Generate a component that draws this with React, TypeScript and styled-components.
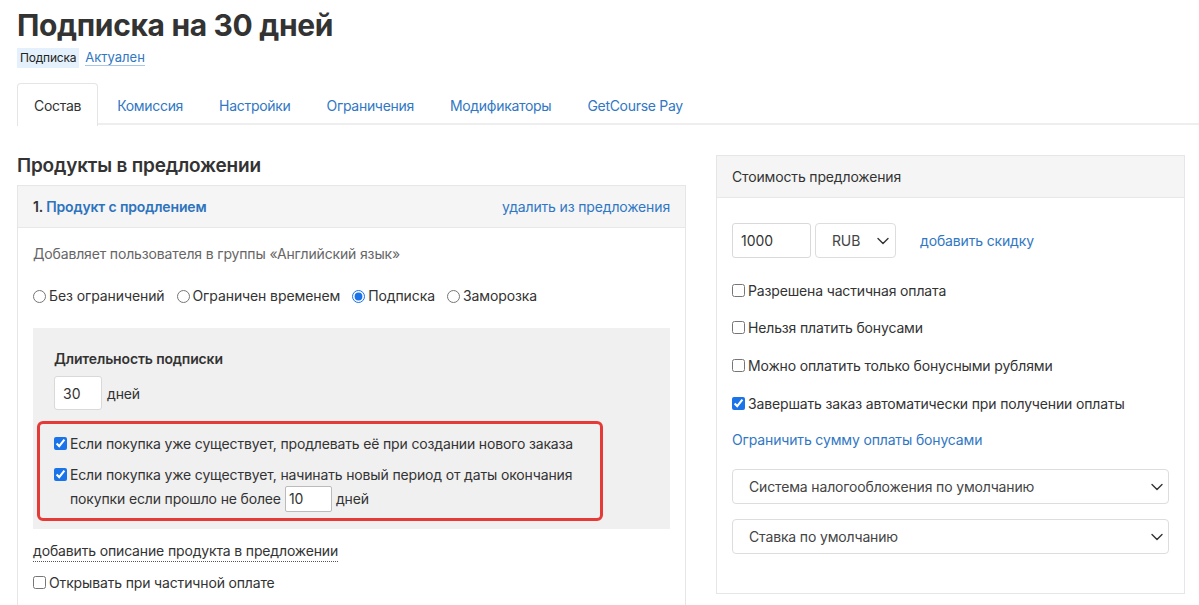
import styled, { createGlobalStyle } from "styled-components";

const GlobalStyle = createGlobalStyle`
  body {
    margin: 0;
    background: #fff;
    font-family: Inter, "Noto Sans", sans-serif;
    color: #333;
  }
  * { box-sizing: border-box; }
`;

const Page = styled.div`
  padding: 6px 0 0 17px;
  overflow: hidden;
`;

const Title = styled.h1`
  margin: 0;
  font-size: 30px;
  font-weight: 700;
  line-height: 38px;
  color: #333;
  letter-spacing: -0.35px;
`;

const Meta = styled.div`
  display: flex;
  align-items: center;
  gap: 6px;
  margin-top: 4px;
  font-size: 12px;
`;

const Badge = styled.span`
  background: #e4f0fb;
  color: #222;
  padding: 3px 3px;
  line-height: 14px;
  letter-spacing: -0.2px;
`;

const MetaLink = styled.a`
  color: #3077c4;
  text-decoration: none;
  border-bottom: 1px solid #a9c8e8;
  font-size: 13px;
  line-height: 15px;
`;

const Tabs = styled.div`
  display: flex;
  margin-top: 15px;
  border-bottom: 2px solid #eee;
  height: 42px;
`;

const Tab = styled.div<{ $active?: boolean }>`
  padding: 0 16px;
  margin-right: 2px;
  display: flex;
  align-items: center;
  font-size: 14px;
  letter-spacing: -0.3px;
  color: ${(p) => (p.$active ? "#333" : "#3077c4")};
  border: 1px solid ${(p) => (p.$active ? "#e5e5e5" : "transparent")};
  border-bottom: none;
  border-radius: 4px 4px 0 0;
  background: ${(p) => (p.$active ? "#fff" : "transparent")};
  margin-bottom: -2px;
  height: 43px;
`;

const Columns = styled.div`
  display: grid;
  grid-template-columns: 669px 469px;
  column-gap: 30px;
  margin-top: 29px;
  letter-spacing: -0.15px;
`;

const Column = styled.div``;

const SectionTitle = styled.h2`
  margin: 0 0 7px;
  font-size: 19px;
  font-weight: 600;
  line-height: 24px;
  color: #333;
  letter-spacing: -0.2px;
`;

const Panel = styled.div<{ $offset?: number }>`
  border: 1px solid #e6e6e6;
  margin-top: ${(p) => p.$offset ?? 0}px;
`;

const PanelHead = styled.div`
  background: #f5f5f5;
  border-bottom: 1px solid #e8e8e8;
  height: 42px;
  padding: 0 15px;
  display: flex;
  align-items: center;
  justify-content: space-between;
  font-size: 14px;
  color: #333;
`;

const HeadTitle = styled.span`
  font-weight: 600;
  a {
    color: #2d73bd;
    text-decoration: none;
  }
`;

const Link = styled.a<{ $mt?: number; $ml?: number }>`
  display: ${(p) => (p.$mt !== undefined ? "block" : "inline")};
  color: #3077c4;
  text-decoration: none;
  font-size: 14px;
  cursor: pointer;
  margin-top: ${(p) => p.$mt ?? 0}px;
  margin-left: ${(p) => p.$ml ?? 0}px;
`;

const PanelBody = styled.div<{ $pad?: string }>`
  padding: ${(p) => p.$pad ?? "15px"};
  font-size: 14px;
`;

const Muted = styled.div`
  color: #666;
  line-height: 20px;
  margin-top: 1px;
`;

const RadioRow = styled.div`
  display: flex;
  gap: 12px;
  margin-top: 22px;
  line-height: 20px;
  letter-spacing: -0.1px;
`;

const Choice = styled.label`
  display: inline-flex;
  align-items: center;
  color: #333;
  input {
    margin: 0 3px 0 0;
    width: 13px;
    height: 13px;
    accent-color: #1a73e8;
  }
`;

const GrayBox = styled.div`
  background: #f0f0f0;
  margin-top: 22px;
  padding: 21px 0 8px 21px;
`;

const Label = styled.div`
  font-weight: 600;
  line-height: 20px;
`;

const InlineRow = styled.div`
  display: flex;
  align-items: center;
  gap: 5px;
  margin-top: 7px;
`;

const NumInput = styled.input<{ $w: number; $h: number }>`
  width: ${(p) => p.$w}px;
  height: ${(p) => p.$h}px;
  border: 1px solid #d9d9d9;
  border-radius: 3px;
  background: #fff;
  padding: 0 8px;
  font: inherit;
  font-size: 14px;
  color: #333;
  outline: none;
`;

const SmallInput = styled(NumInput)`
  border-color: #bbb;
  border-radius: 2px;
  padding: 0 3px;
`;

const Highlight = styled.div`
  margin: 11px 0 0 -17px;
  width: 566px;
  border: 3px solid #e53a35;
  border-radius: 6px;
  padding: 8px 14px 8px 14px;
`;

const CheckLine = styled.label<{ $gap?: number }>`
  display: flex;
  align-items: flex-start;
  line-height: 23px;
  margin-top: ${(p) => p.$gap ?? 0}px;
  color: #333;
  > input {
    margin: 5px 3px 0 0;
    width: 13px;
    height: 13px;
    flex-shrink: 0;
    accent-color: #1a73e8;
  }
`;

const Wrap = styled.span`
  display: flex;
  flex-direction: column;
`;

const Inline = styled.span`
  display: flex;
  align-items: center;
  gap: 4px;
  height: 23px;
  margin-top: 1px;
`;

const DottedLink = styled.div`
  display: inline-block;
  margin-top: 12px;
  line-height: 20px;
  border-bottom: 1px dotted #555;
  color: #333;
`;

const PriceRow = styled.div`
  display: flex;
  align-items: center;
  gap: 4px;
  margin-top: 10px;
`;

const SelectBox = styled.div<{ $w?: number; $pr?: number }>`
  width: ${(p) => (p.$w ? `${p.$w}px` : "100%")};
  height: 35px;
  border: 1px solid #ddd;
  border-radius: 4px;
  background: #fff;
  display: flex;
  align-items: center;
  padding: 0 ${(p) => p.$pr ?? 5}px 0 16px;
  font-size: 14px;
  color: #444;
  justify-content: space-between;
`;

const SelectStack = styled.div`
  display: flex;
  flex-direction: column;
  gap: 15px;
  margin-top: 21px;
`;

const Chevron = () => (
  <svg width="12" height="8" viewBox="0 0 12 8" fill="none">
    <path d="M1 1.5l5 5 5-5" stroke="#333" strokeWidth="1.4" strokeLinecap="round" strokeLinejoin="round" />
  </svg>
);

const tabs = ["Состав", "Комиссия", "Настройки", "Ограничения", "Модификаторы", "GetCourse Pay"];

export default function App() {
  return (
    <>
      <GlobalStyle />
      <Page>
        <Title>Подписка на 30 дней</Title>
        <Meta>
          <Badge>Подписка</Badge>
          <MetaLink>Актуален</MetaLink>
        </Meta>
        <Tabs>
          {tabs.map((t, i) => (
            <Tab key={t} $active={i === 0}>
              {t}
            </Tab>
          ))}
        </Tabs>

        <Columns>
          <Column>
            <SectionTitle>Продукты в предложении</SectionTitle>
            <Panel>
              <PanelHead>
                <HeadTitle>
                  1. <a>Продукт с продлением</a>
                </HeadTitle>
                <Link>удалить из предложения</Link>
              </PanelHead>
              <PanelBody>
                <Muted>Добавляет пользователя в группы «Английский язык»</Muted>
                <RadioRow>
                  <Choice>
                    <input type="radio" name="kind" />
                    Без ограничений
                  </Choice>
                  <Choice>
                    <input type="radio" name="kind" />
                    Ограничен временем
                  </Choice>
                  <Choice>
                    <input type="radio" name="kind" defaultChecked />
                    Подписка
                  </Choice>
                  <Choice>
                    <input type="radio" name="kind" />
                    Заморозка
                  </Choice>
                </RadioRow>

                <GrayBox>
                  <Label>Длительность подписки</Label>
                  <InlineRow>
                    <NumInput $w={48} $h={34} defaultValue="30" readOnly />
                    <span>дней</span>
                  </InlineRow>
                  <Highlight>
                    <CheckLine>
                      <input type="checkbox" defaultChecked />
                      Если покупка уже существует, продлевать её при создании нового заказа
                    </CheckLine>
                    <CheckLine $gap={8}>
                      <input type="checkbox" defaultChecked />
                      <Wrap>
                        <span>Если покупка уже существует, начинать новый период от даты окончания</span>
                        <Inline>
                          покупки если прошло не более
                          <SmallInput $w={47} $h={26} defaultValue="10" readOnly />
                          дней
                        </Inline>
                      </Wrap>
                    </CheckLine>
                  </Highlight>
                </GrayBox>

                <DottedLink>добавить описание продукта в предложении</DottedLink>
                <CheckLine $gap={9}>
                  <input type="checkbox" />
                  Открывать при частичной оплате
                </CheckLine>
                <CheckLine $gap={30}>
                  <input type="checkbox" />
                  &nbsp;
                </CheckLine>
              </PanelBody>
            </Panel>
          </Column>

          <Column>
            <Panel $offset={1}>
              <PanelHead>
                <span>Стоимость предложения</span>
              </PanelHead>
              <PanelBody $pad="15px 15px 39px">
                <PriceRow>
                  <NumInput $w={79} $h={35} defaultValue="1000" readOnly />
                  <SelectBox $w={81} $pr={6}>
                    RUB
                    <Chevron />
                  </SelectBox>
                  <Link $ml={20}>добавить скидку</Link>
                </PriceRow>
                <CheckLine $gap={21}>
                  <input type="checkbox" />
                  Разрешена частичная оплата
                </CheckLine>
                <CheckLine $gap={14}>
                  <input type="checkbox" />
                  Нельзя платить бонусами
                </CheckLine>
                <CheckLine $gap={15}>
                  <input type="checkbox" />
                  Можно оплатить только бонусными рублями
                </CheckLine>
                <CheckLine $gap={15}>
                  <input type="checkbox" defaultChecked />
                  Завершать заказ автоматически при получении оплаты
                </CheckLine>
                <Link as="div" $mt={16}>
                  Ограничить сумму оплаты бонусами
                </Link>
                <SelectStack>
                  <SelectBox>
                    Система налогообложения по умолчанию
                    <Chevron />
                  </SelectBox>
                  <SelectBox>
                    Ставка по умолчанию
                    <Chevron />
                  </SelectBox>
                </SelectStack>
              </PanelBody>
            </Panel>
          </Column>
        </Columns>
      </Page>
    </>
  );
}
